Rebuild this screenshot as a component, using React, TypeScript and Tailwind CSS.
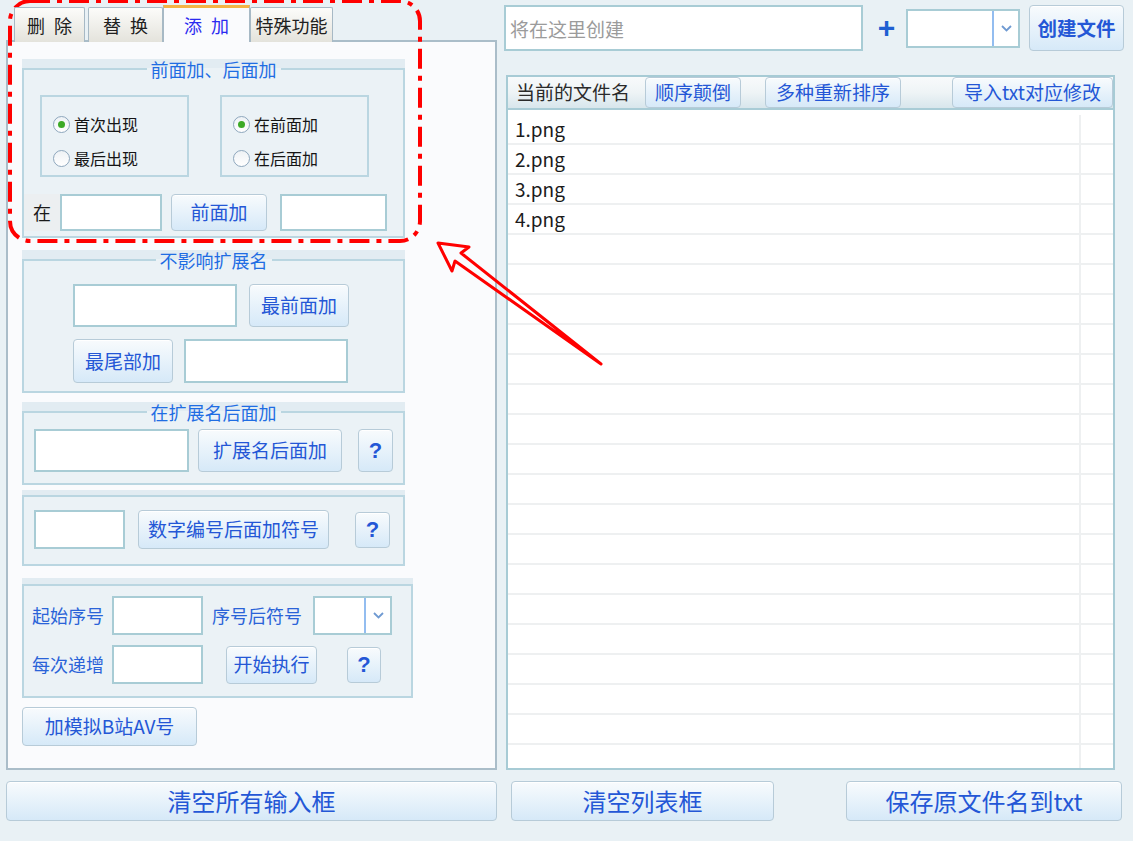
import React from 'react';

const FONT = "font-['Noto_Sans_CJK_SC','Noto_Sans',sans-serif]";

const Btn: React.FC<{ className?: string; children?: React.ReactNode }> = ({ className = '', children }) => (
  <button
    className={`flex shrink-0 items-center justify-center rounded-[4px] border border-[#b7cbd8] bg-gradient-to-b from-[#f8fbfd] to-[#d6e9f8] text-[#2457d6] shadow-[inset_0_1px_0_#ffffff] ${className}`}
  >
    {children}
  </button>
);

const Field: React.FC<{ className?: string; placeholder?: string }> = ({ className = '', placeholder }) => (
  <input
    readOnly
    placeholder={placeholder}
    className={`shrink-0 border-2 border-[#a8ccd5] bg-white outline-none ${className}`}
  />
);

const Combo: React.FC<{ className?: string }> = ({ className = '' }) => (
  <div className={`flex shrink-0 border-2 border-[#a8ccd5] bg-white ${className}`}>
    <div className="flex-1" />
    <div className="flex w-[26px] items-center justify-center border-l-2 border-[#93bdf0]">
      <svg width="11" height="7" viewBox="0 0 11 7">
        <path d="M1 1 L5.5 5.5 L10 1" fill="none" stroke="#6f9ad2" strokeWidth="1.8" />
      </svg>
    </div>
  </div>
);

const Help: React.FC<{ className?: string }> = ({ className = '' }) => (
  <Btn className={`font-['Liberation_Sans',sans-serif] text-[22px] font-bold text-[#1848c8] ${className}`}>?</Btn>
);

const Radio: React.FC<{ checked?: boolean; label: string }> = ({ checked, label }) => (
  <div className="flex h-[20px] items-center gap-[4px]">
    <span className="flex h-[17px] w-[17px] items-center justify-center rounded-full border border-[#8ea7bd] bg-gradient-to-b from-[#eef2f5] to-white">
      {checked && <span className="h-[7px] w-[7px] rounded-full bg-[#3daa26]" />}
    </span>
    <span className="text-[16px] leading-[20px] text-[#151515]">{label}</span>
  </div>
);

const Group: React.FC<{ title?: string; className?: string; children?: React.ReactNode }> = ({ title, className = '', children }) => (
  <div className={`bg-[#e2ecf2] ${title ? '' : 'pt-[5px]'} ${className}`}>
    <fieldset className="border-2 border-[#bad6e1] bg-[#ebf2f6]">
      {title && (
        <legend className="mx-auto px-[4px] text-[18px] leading-[20px] text-[#1f6de3]">{title}</legend>
      )}
      {children}
    </fieldset>
  </div>
);

const tabBase =
  'flex h-[35px] shrink-0 items-center justify-center gap-[9px] rounded-t-[2px] border border-b-0 border-[#a7b9c5] bg-gradient-to-b from-[#fcfcfa] to-[#e4e3dc] text-[18px] text-[#202020]';

const files = ['1.png', '2.png', '3.png', '4.png'];
const rows = Array.from({ length: 22 }, (_, i) => files[i] ?? '');

export default function App() {
  return (
    <div className={`relative h-[841px] w-[1133px] overflow-hidden bg-[#e9f1f5] ${FONT}`}>
      <div className="flex pl-[6px]">
        {/* left side: tabs + panel */}
        <div className="w-[491px] shrink-0">
          <div className="relative z-10 -mb-[2px] flex h-[42px] items-end pt-[5px]">
            <div className={`${tabBase} ml-[8px] w-[71px]`}>
              <span>删</span>
              <span>除</span>
            </div>
            <div className={`${tabBase} ml-[3px] w-[75px]`}>
              <span>替</span>
              <span>换</span>
            </div>
            <div className="flex h-[37px] w-[87px] shrink-0 items-center justify-center gap-[9px] border-x border-t-[3px] border-x-[#a7b9c5] border-t-[#f4b445] bg-[#fafbfd] text-[18px] text-[#2a2af0]">
              <span>添</span>
              <span>加</span>
            </div>
            <div className={`${tabBase} w-[83px]`}>特殊功能</div>
          </div>

          <div className="h-[730px] border-2 border-[#aabdc9] bg-[#fafbfd] pl-[14px] pt-[17px]">
            <Group title="前面加、后面加" className="w-[383px]">
              <div className="ml-[16px] mt-[16px] flex gap-[31px]">
                <div className="flex h-[82px] w-[149px] flex-col gap-[14px] border-2 border-[#bad6e1] pl-[11px] pt-[17px]">
                  <Radio checked label="首次出现" />
                  <Radio label="最后出现" />
                </div>
                <div className="flex h-[82px] w-[149px] flex-col gap-[14px] border-2 border-[#bad6e1] pl-[11px] pt-[17px]">
                  <Radio checked label="在前面加" />
                  <Radio label="在后面加" />
                </div>
              </div>
              <div className="mt-[17px] flex items-center pb-[5px]">
                <div className="flex h-[37px] w-[36px] items-center justify-center bg-[#eceff1] text-[18px] text-[#1a1a1a]">在</div>
                <Field className="h-[37px] w-[102px]" />
                <Btn className="ml-[9px] h-[37px] w-[96px] text-[19px]">前面加</Btn>
                <Field className="ml-[13px] h-[37px] w-[107px]" />
              </div>
            </Group>

            <Group title="不影响扩展名" className="mt-[12px] w-[383px]">
              <div className="ml-[49px] mt-[14px] flex gap-[12px]">
                <Field className="h-[43px] w-[164px]" />
                <Btn className="h-[43px] w-[100px] text-[19px]">最前面加</Btn>
              </div>
              <div className="ml-[49px] mt-[12px] flex gap-[11px] pb-[8px]">
                <Btn className="h-[44px] w-[100px] text-[19px]">最尾部加</Btn>
                <Field className="h-[44px] w-[164px]" />
              </div>
            </Group>

            <Group title="在扩展名后面加" className="mt-[9px] w-[383px]">
              <div className="ml-[10px] mt-[7px] flex items-center pb-[11px]">
                <Field className="h-[43px] w-[155px]" />
                <Btn className="ml-[9px] h-[43px] w-[144px] text-[19px]">扩展名后面加</Btn>
                <Help className="ml-[16px] h-[43px] w-[35px]" />
              </div>
            </Group>

            <Group className="mt-[5px] w-[383px]">
              <div className="ml-[10px] mt-[13px] flex items-center pb-[15px]">
                <Field className="h-[39px] w-[91px]" />
                <Btn className="ml-[13px] h-[39px] w-[191px] text-[19px]">数字编号后面加符号</Btn>
                <Help className="ml-[26px] h-[36px] w-[35px]" />
              </div>
            </Group>

            <Group className="mt-[12px] w-[391px] !pt-[6px]">
              <div className="ml-[8px] mt-[10px] flex items-center">
                <span className="w-[72px] text-[18px] text-[#2a63d8]">起始序号</span>
                <Field className="ml-[8px] h-[39px] w-[91px]" />
                <span className="ml-[9px] w-[90px] text-[18px] text-[#2a63d8]">序号后符号</span>
                <Combo className="ml-[11px] h-[39px] w-[79px]" />
              </div>
              <div className="ml-[8px] mt-[10px] flex items-center pb-[12px]">
                <span className="w-[72px] text-[18px] text-[#2a63d8]">每次递增</span>
                <Field className="ml-[8px] h-[39px] w-[91px]" />
                <Btn className="ml-[23px] h-[38px] w-[91px] text-[19px]">开始执行</Btn>
                <Help className="ml-[30px] h-[36px] w-[34px]" />
              </div>
            </Group>

            <Btn className="mt-[9px] h-[39px] w-[175px] text-[19px]">加模拟B站AV号</Btn>
          </div>
        </div>

        {/* right side: create bar + file list */}
        <div className="ml-[7px] w-[620px] shrink-0 pt-[5px]">
          <div className="flex items-center">
            <Field
              placeholder="将在这里创建"
              className="h-[46px] w-[359px] pl-[4px] text-[19px] placeholder:text-[#9b9b9b]"
            />
            <span className="ml-[14px] w-[20px] text-center font-['Liberation_Sans',sans-serif] text-[30px] font-bold leading-none text-[#1f5fd2]">+</span>
            <Combo className="ml-[10px] h-[39px] w-[114px]" />
            <Btn className="ml-[9px] h-[46px] w-[95px] text-[19.5px] font-bold text-[#1f52c8]">创建文件</Btn>
          </div>

          <div className="ml-[2px] mt-[24px] h-[695px] w-[609px] overflow-hidden border-2 border-[#a7cbd5] bg-white">
            <div className="flex h-[33px] items-center border-b-2 border-[#a9ccd6] bg-gradient-to-b from-[#f8fafb] via-[#eef4f6] to-[#d8e6ec]">
              <span className="w-[137px] pl-[8px] text-[19px] text-[#2a2a2a]">当前的文件名</span>
              <Btn className="h-[31px] w-[96px] text-[19px]">顺序颠倒</Btn>
              <Btn className="ml-[24px] h-[31px] w-[136px] text-[19px]">多种重新排序</Btn>
              <Btn className="ml-[51px] h-[31px] w-[161px] text-[19px]">导入txt对应修改</Btn>
            </div>
            <div className="pt-[5px]">
              {rows.map((name, i) => (
                <div key={i} className="flex h-[30px] border-b-2 border-[#eef0f1]">
                  <div className="flex w-[571px] items-center pl-[7px] text-[19px] text-[#1b1b1b]">{name}</div>
                  <div className="w-[2px] bg-[#eef0f1]" />
                </div>
              ))}
            </div>
          </div>
        </div>
      </div>

      <div className="mt-[11px] flex pl-[6px]">
        <Btn className="h-[40px] w-[491px] text-[24px]">清空所有输入框</Btn>
        <Btn className="ml-[14px] h-[40px] w-[263px] text-[24px]">清空列表框</Btn>
        <Btn className="ml-[72px] h-[40px] w-[276px] text-[24px]">保存原文件名到txt</Btn>
      </div>

      {/* red annotation drawn over the screenshot */}
      <svg className="pointer-events-none absolute inset-0" width="1133" height="841" viewBox="0 0 1133 841">
        <rect
          x="10"
          y="1"
          width="410"
          height="240"
          rx="20"
          fill="none"
          stroke="#ff0000"
          strokeWidth="4"
          strokeDasharray="20 7 5 7"
        />
        <polygon
          points="438,243 469,247 461,253 601,364 455,261 452,271"
          fill="none"
          stroke="#ff0000"
          strokeWidth="3"
          strokeLinejoin="round"
        />
      </svg>
    </div>
  );
}
